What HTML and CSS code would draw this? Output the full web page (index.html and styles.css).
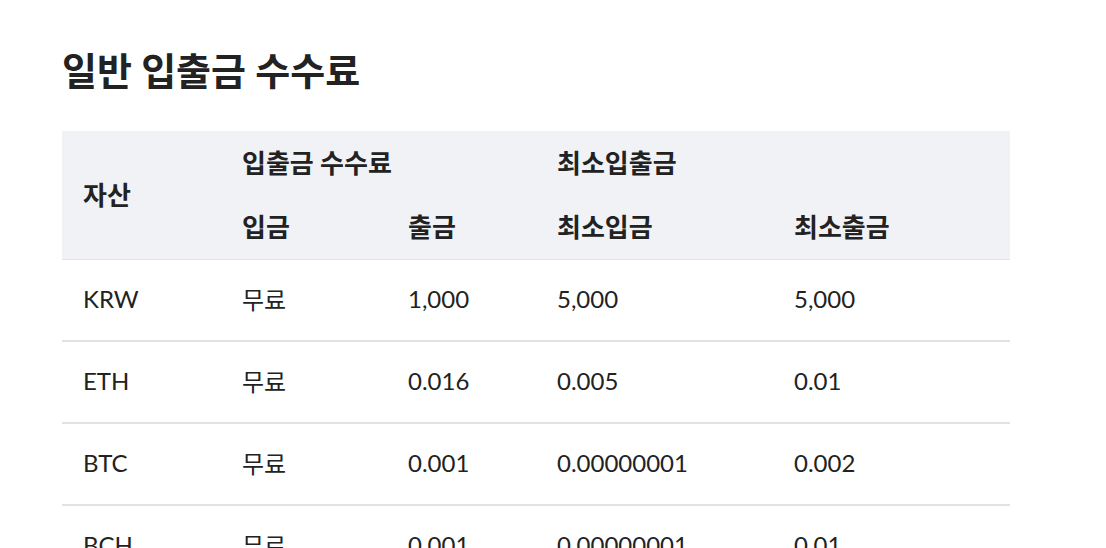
FILE: index.html
```html
<!DOCTYPE html>
<html lang="ko">

<head>
    <meta charset="UTF-8" />
    <title>일반 입출금 수수료</title>
    <link rel="stylesheet" href="styles.css">
</head>

<body>
    <div class="container">
        <h1>일반 입출금 수수료</h1>

        <table class="fee-table">
            <colgroup>
                <col class="col-asset">
                <col class="col-in">
                <col class="col-out">
                <col class="col-min">
                <col class="col-min">
            </colgroup>
            <thead>
                <tr>
                    <th rowspan="2">자산</th>
                    <th colspan="2">입출금 수수료</th>
                    <th colspan="2">최소입출금</th>
                </tr>
                <tr>
                    <th>입금</th>
                    <th>출금</th>
                    <th>최소입금</th>
                    <th>최소출금</th>
                </tr>
            </thead>
            <tbody>
                <tr>
                    <td>KRW</td>
                    <td>무료</td>
                    <td>1,000</td>
                    <td>5,000</td>
                    <td>5,000</td>
                </tr>
                <tr>
                    <td>ETH</td>
                    <td>무료</td>
                    <td>0.016</td>
                    <td>0.005</td>
                    <td>0.01</td>
                </tr>
                <tr>
                    <td>BTC</td>
                    <td>무료</td>
                    <td>0.001</td>
                    <td>0.00000001</td>
                    <td>0.002</td>
                </tr>
                <tr>
                    <td>BCH</td>
                    <td>무료</td>
                    <td>0.001</td>
                    <td>0.00000001</td>
                    <td>0.01</td>
                </tr>
            </tbody>
        </table>
    </div>
</body>

</html>
```

FILE: styles.css
```css
body {
    font-family: Lato, "Noto Sans CJK KR", sans-serif;
    background-color: white;
    color: #222;
    margin: 0;
    padding: 0;
}

.container {
    width: 948px;
    padding: 40px 62px;
}

h1 {
    font-size: 38px;
    font-weight: bold;
    line-height: 60px;
    margin: 0 0 31px;
}

.fee-table {
    width: 948px;
    border-collapse: collapse;
    table-layout: fixed;
}

.col-asset {
    width: 159px;
}

.col-in {
    width: 166px;
}

.col-out {
    width: 149px;
}

.col-min {
    width: 237px;
}

thead {
    background-color: #f1f2f6;
    border-bottom: 1px solid #e4e4e4;
}

th {
    height: 60px;
    padding: 0 21px 4px;
    font-size: 26px;
    font-weight: bold;
    text-align: left;
}

td {
    height: 76px;
    padding: 0 21px 4px;
    font-size: 24px;
    border-bottom: 2px solid #e2e2e2;
}
```
